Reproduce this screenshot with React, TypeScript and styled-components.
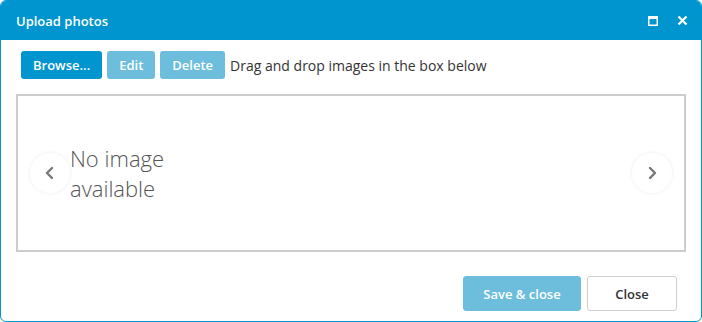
import React from "react";
import styled, { createGlobalStyle } from "styled-components";

const GlobalStyle = createGlobalStyle`
  html, body {
    margin: 0;
    padding: 0;
    background: #ffffff;
  }
  body {
    font-family: "Open Sans", "Liberation Sans", sans-serif;
  }
`;

const Dialog = styled.div`
  box-sizing: border-box;
  width: 702px;
  height: 322px;
  border: 1px solid #0095cf;
  border-radius: 6px;
  overflow: hidden;
  display: flex;
  flex-direction: column;
  background: #fff;
`;

const TitleBar = styled.div`
  height: 39px;
  background: #0095cf;
  color: #fff;
  display: flex;
  align-items: center;
  padding: 0 13px 0 15px;
  flex-shrink: 0;
`;

const Title = styled.div`
  flex: 1;
  font-size: 13px;
  font-weight: 600;
`;

const TitleIcons = styled.div`
  display: flex;
  align-items: center;
  gap: 19px;
`;

const Body = styled.div`
  flex: 1;
  display: flex;
  flex-direction: column;
  padding: 11px 15px 0 15px;
`;

const Toolbar = styled.div`
  display: flex;
  align-items: center;
  gap: 5px;
  padding-left: 5px;
  height: 28px;
`;

const ToolButton = styled.button<{ $disabled?: boolean }>`
  height: 28px;
  padding: 0 12px;
  border: none;
  border-radius: 3px;
  background: ${(p) => (p.$disabled ? "#6dbedd" : "#0095cf")};
  color: #fff;
  font-family: inherit;
  font-size: 13px;
  font-weight: 600;
`;

const Hint = styled.span`
  font-size: 14px;
  color: #333;
`;

const DropBox = styled.div`
  box-sizing: border-box;
  margin-top: 15px;
  height: 158px;
  border: 2px solid #cccccc;
  display: flex;
  align-items: center;
  padding: 0 12px;
`;

const NavCircle = styled.div`
  width: 40px;
  height: 40px;
  border-radius: 50%;
  background: #fff;
  box-shadow: 0 0 4px rgba(0, 0, 0, 0.08);
  display: flex;
  align-items: center;
  justify-content: center;
  flex-shrink: 0;
`;

const EmptyText = styled.div`
  flex: 1;
  font-size: 22px;
  font-weight: 300;
  color: #555;
  line-height: 30px;
`;

const Footer = styled.div`
  display: flex;
  justify-content: flex-end;
  gap: 6px;
  padding: 24px 9px 0 0;
`;

const FooterButton = styled.button<{ $primary?: boolean }>`
  box-sizing: border-box;
  height: 35px;
  width: ${(p) => (p.$primary ? "118px" : "90px")};
  border-radius: 3px;
  border: 1px solid ${(p) => (p.$primary ? "#6dbedd" : "#cfcfcf")};
  background: ${(p) => (p.$primary ? "#6dbedd" : "#fff")};
  color: ${(p) => (p.$primary ? "#fff" : "#333")};
  font-family: inherit;
  font-size: 13px;
  font-weight: 600;
`;

const Chevron = ({ dir }: { dir: "left" | "right" }) => (
  <svg width="12" height="14" viewBox="0 0 12 14">
    <path
      d={dir === "left" ? "M8 2 L3 7 L8 12" : "M4 2 L9 7 L4 12"}
      fill="none"
      stroke="#777"
      strokeWidth="2.4"
      strokeLinecap="round"
      strokeLinejoin="round"
    />
  </svg>
);

const App = () => {
  return (
    <>
      <GlobalStyle />
      <Dialog>
        <TitleBar>
          <Title>Upload photos</Title>
          <TitleIcons>
            <svg width="10" height="10" viewBox="0 0 10 10">
              <rect x="0.75" y="0.75" width="8.5" height="8.5" fill="none" stroke="#fff" strokeWidth="1.5" />
              <rect x="0" y="0" width="10" height="3" fill="#fff" />
            </svg>
            <svg width="11" height="11" viewBox="0 0 11 11">
              <path d="M1.5 1.5 L9.5 9.5 M9.5 1.5 L1.5 9.5" stroke="#fff" strokeWidth="2.2" />
            </svg>
          </TitleIcons>
        </TitleBar>
        <Body>
          <Toolbar>
            <ToolButton>Browse...</ToolButton>
            <ToolButton $disabled>Edit</ToolButton>
            <ToolButton $disabled>Delete</ToolButton>
            <Hint>Drag and drop images in the box below</Hint>
          </Toolbar>
          <DropBox>
            <NavCircle>
              <Chevron dir="left" />
            </NavCircle>
            <EmptyText>
              No image
              <br />
              available
            </EmptyText>
            <NavCircle>
              <Chevron dir="right" />
            </NavCircle>
          </DropBox>
          <Footer>
            <FooterButton $primary>Save &amp; close</FooterButton>
            <FooterButton>Close</FooterButton>
          </Footer>
        </Body>
      </Dialog>
    </>
  );
};

export default App;
